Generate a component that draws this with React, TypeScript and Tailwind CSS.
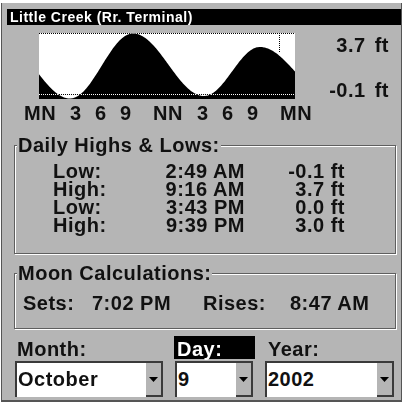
import React from "react";

// extremes of the tide curve in chart coordinates (x, y), cosine-interpolated
const EXTREMES: [number, number][] = [
  [-35, 12],
  [31, 65.5],
  [94, 0.5],
  [165, 63],
  [221, 14],
  [290, 62],
];

const CHART_W = 256;
const CHART_H = 66;

function tideY(x: number) {
  for (let i = 0; i < EXTREMES.length - 1; i++) {
    const [x0, y0] = EXTREMES[i];
    const [x1, y1] = EXTREMES[i + 1];
    if (x >= x0 && x <= x1) {
      const t = (x - x0) / (x1 - x0);
      return y0 + ((y1 - y0) * (1 - Math.cos(Math.PI * t))) / 2;
    }
  }
  return CHART_H;
}

function tidePath() {
  const pts: string[] = [`M0,${CHART_H}`];
  for (let x = 0; x <= CHART_W; x += 1) {
    pts.push(`L${x},${tideY(x).toFixed(2)}`);
  }
  pts.push(`L${CHART_W},${CHART_H} Z`);
  return pts.join(" ");
}

const HOURS = [
  { label: "MN", w: "w-[46px]" },
  { label: "3", w: "w-[25px]" },
  { label: "6", w: "w-[25px]" },
  { label: "9", w: "w-[33px]" },
  { label: "NN", w: "w-[44px]" },
  { label: "3", w: "w-[25px]" },
  { label: "6", w: "w-[25px]" },
  { label: "9", w: "w-[33px]" },
  { label: "MN", w: "w-auto" },
];

const TIDES = [
  { kind: "Low:", time: "2:49 AM", height: "-0.1 ft" },
  { kind: "High:", time: "9:16 AM", height: "3.7 ft" },
  { kind: "Low:", time: "3:43 PM", height: "0.0 ft" },
  { kind: "High:", time: "9:39 PM", height: "3.0 ft" },
];

function TideChart() {
  return (
    <svg width={CHART_W} height={CHART_H} className="block" shapeRendering="crispEdges">
      <rect x={0} y={0} width={CHART_W} height={CHART_H} fill="#fff" />
      <path d={tidePath()} fill="#000" shapeRendering="auto" />
      <line x1={0} y1={0.5} x2={CHART_W} y2={0.5} stroke="#fff" strokeDasharray="1 1" style={{ mixBlendMode: "difference" }} />
      <line x1={0} y1={61.5} x2={CHART_W} y2={61.5} stroke="#fff" strokeDasharray="1 1" style={{ mixBlendMode: "difference" }} />
      <line x1={240.5} y1={0} x2={240.5} y2={20} stroke="#000" strokeDasharray="1 1" />
    </svg>
  );
}

function Dropdown({ value, w }: { value: string; w: string }) {
  return (
    <div className={`${w} h-[36px] flex border-t-2 border-l-2 border-[#3a3a3a] bg-white`}>
      <div className="flex-1 flex items-center pl-[1px] pb-[2px]">{value}</div>
      <div className="w-[17px] bg-[#b5b5b5] border-r-2 border-b-2 border-[#3a3a3a] flex items-center justify-center">
        <svg width="9" height="5" className="block">
          <polygon points="0,0 9,0 4.5,5" fill="#000" />
        </svg>
      </div>
    </div>
  );
}

export default function App() {
  return (
    <div className="w-[406px] h-[406px] bg-white overflow-hidden font-['Liberation_Sans',Arial,sans-serif] font-bold text-[#111] text-[20px] leading-[19px] tracking-[0.5px]">
      <div className="ml-[1px] mt-[3px] w-[401px] h-[399px] bg-[#b5b5b5] border-l border-r border-b-2 border-[#555] flex flex-col">
        {/* title bar */}
        <div className="ml-[5px] mt-[6px] h-[16px] bg-black text-white text-[14px] leading-[16px] tracking-[0.5px] pl-[3px]">
          Little Creek (Rr. Terminal)
        </div>

        {/* tide chart */}
        <div className="mt-[8px] flex items-start">
          <div className="ml-[37px]">
            <TideChart />
          </div>
          <div className="flex-1 flex flex-col items-end pr-[12px] [word-spacing:3px]">
            <span className="mt-[3px]">3.7 ft</span>
            <span className="mt-[26px]">-0.1 ft</span>
          </div>
        </div>
        <div className="mt-[4px] flex pl-[22px]">
          {HOURS.map((h, i) => (
            <span key={i} className={h.w}>
              {h.label}
            </span>
          ))}
        </div>

        {/* daily highs & lows */}
        <fieldset className="mt-[13px] ml-[12px] w-[382px] border border-[#5f5f5f] shadow-[inset_1px_1px_0_#fff,1px_1px_0_#fff]">
          <legend className="ml-[2px] px-[1px] bg-[#b5b5b5]">Daily Highs &amp; Lows:</legend>
          <div className="grid grid-cols-[112px_80px_100px] pl-[38px] pt-[7px] pb-[19px] leading-[18px]">
            {TIDES.map((t, i) => (
              <React.Fragment key={i}>
                <span>{t.kind}</span>
                <span className="text-right">{t.time}</span>
                <span className="text-right">{t.height}</span>
              </React.Fragment>
            ))}
          </div>
        </fieldset>

        {/* moon */}
        <fieldset className="mt-[10px] ml-[12px] w-[382px] border border-[#5f5f5f] shadow-[inset_1px_1px_0_#fff,1px_1px_0_#fff]">
          <legend className="ml-[2px] px-[1px] bg-[#b5b5b5]">Moon Calculations:</legend>
          <div className="grid grid-cols-[69px_111px_87px_auto] pl-[8px] pt-[11px] pb-[15px]">
            <span>Sets:</span>
            <span>7:02 PM</span>
            <span>Rises:</span>
            <span>8:47 AM</span>
          </div>
        </fieldset>

        {/* date pickers */}
        <div className="mt-[7px] flex h-[23px] leading-[26px]">
          <div className="ml-[13px] w-[148px] pl-[2px]">Month:</div>
          <div className="ml-[11px] w-[81px] bg-black text-white pl-[3px]">Day:</div>
          <div className="ml-[10px] w-[129px] pl-[3px]">Year:</div>
        </div>
        <div className="mt-[2px] flex">
          <div className="ml-[13px]">
            <Dropdown value="October" w="w-[148px]" />
          </div>
          <div className="ml-[12px]">
            <Dropdown value="9" w="w-[78px]" />
          </div>
          <div className="ml-[12px]">
            <Dropdown value="2002" w="w-[129px]" />
          </div>
        </div>
      </div>
    </div>
  );
}
